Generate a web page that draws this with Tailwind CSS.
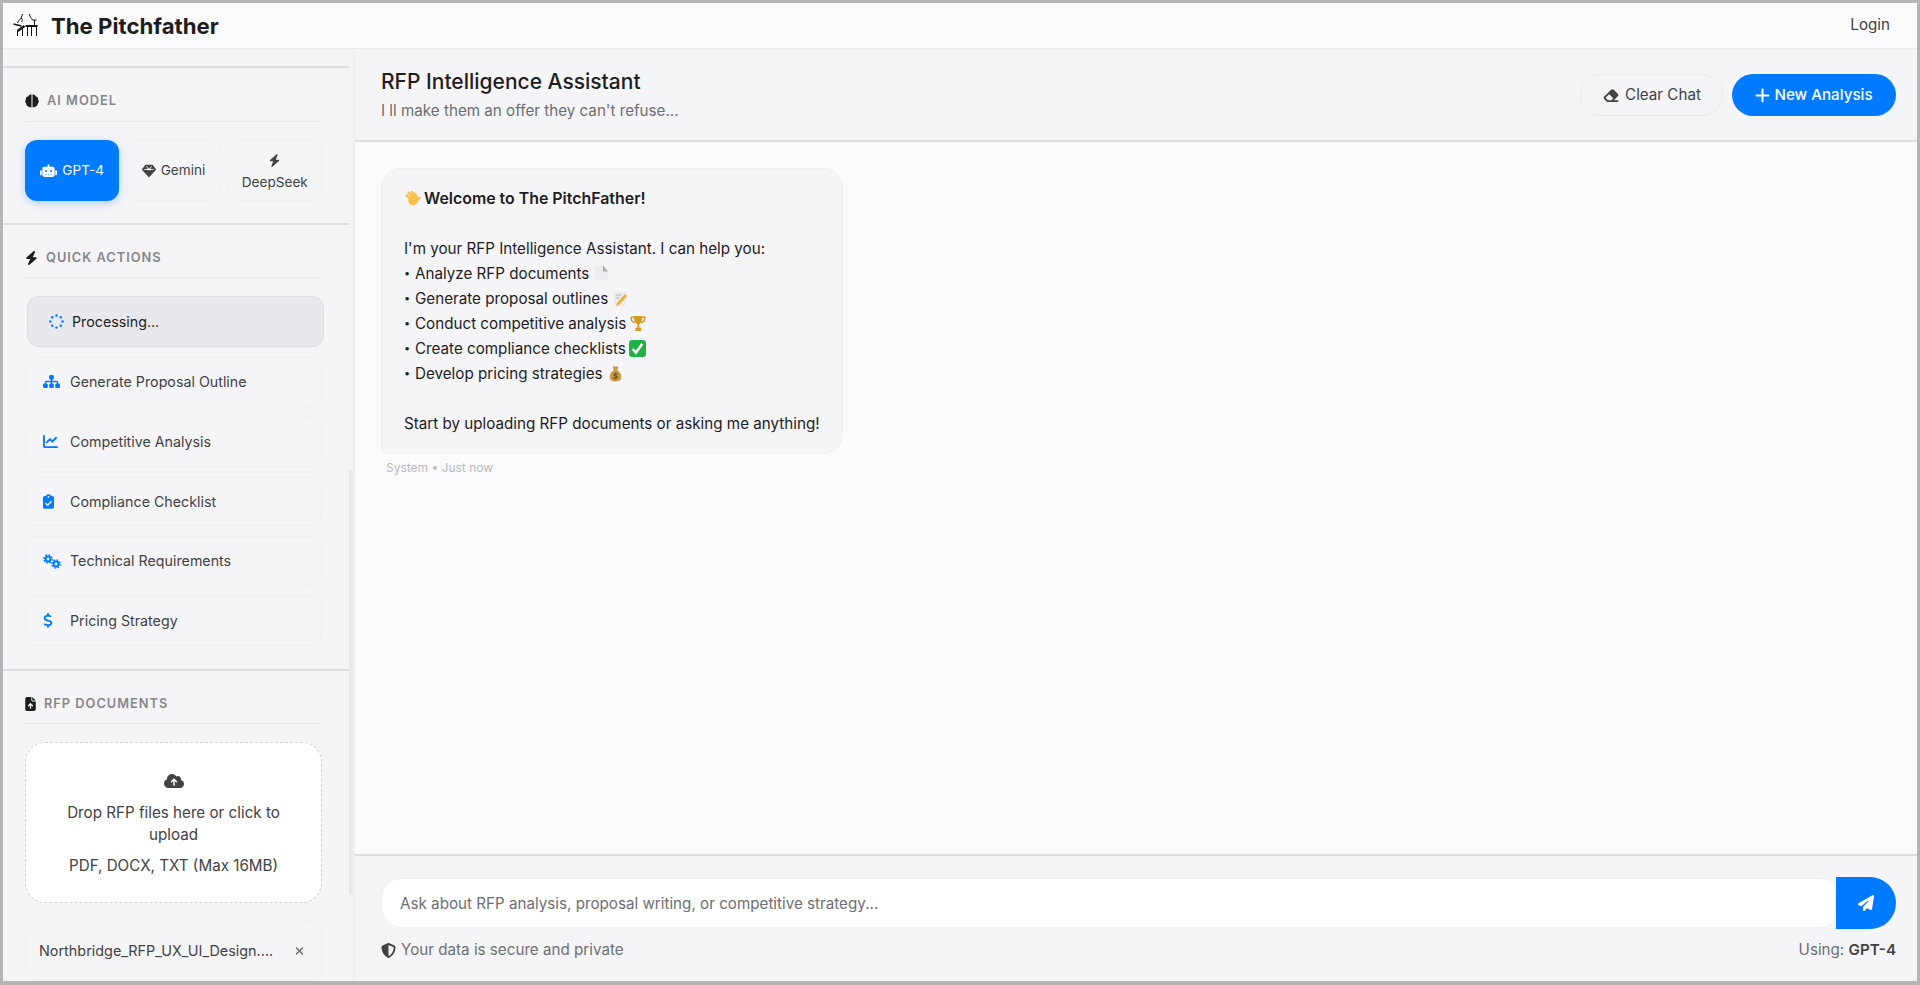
<!DOCTYPE html>
<html lang="en">
<head>
    <meta charset="UTF-8" />
    <meta name="viewport" content="width=device-width, initial-scale=1" />
    <title>The Pitchfather</title>
    <script src="https://cdn.jsdelivr.net/npm/@tailwindcss/browser@4"></script>
</head>
<body class="h-[985px] overflow-hidden bg-[#b4b4b4] pt-[3px] px-[3px] pb-[4px] font-['Inter',sans-serif] text-[#1d1d1f]">
<div class="flex h-full flex-col overflow-hidden bg-[#f5f5f7]">
    <!-- navbar -->
    <nav class="flex h-[46px] shrink-0 items-center justify-between border-b border-[#ececf0] bg-[#fbfbfd] pl-[9px] pr-[27px]">
        <div class="flex items-center gap-[11px]">
            <svg class="w-[28px] h-[25px]" viewBox="0 0 27 25" fill="none" stroke="#111" stroke-width="1">
                <path d="M5 10C6 7 9 6 10 1M9 5c1 2 1 3 0 4"/>
                <path d="M1 11l8 2" stroke-width="1.800"/>
                <path d="M5 18l7-5" stroke-width="2.200"/>
                <path d="M5 18v5M10 15v8M15 14v9M19 14v9M24 14v9"/>
                <path d="M13 13h12" stroke-width="2"/>
                <path d="M17 1c0 3 2 4 3 6h4M22 7v5"/>
            </svg>
            <span class="text-[22.200px] font-bold text-[#1d1d1f]">The Pitchfather</span>
        </div>
        <a href="#" class="text-[15.200px] text-[#424245]">Login</a>
    </nav>

    <div class="flex min-h-0 flex-1">
        <!-- sidebar -->
        <aside class="relative flex w-[352px] shrink-0 flex-col overflow-hidden border-r-2 border-[#f0f0f3] pr-[4px]">
            <div class="h-[19px] shrink-0 border-b-2 border-[#dedee2]"></div>

            <section class="shrink-0 border-b-2 border-[#dedee2] pl-[22px] pr-[27px] pt-[24px] pb-[22px]">
                <h3 class="mb-[18px] flex h-[30px] items-start gap-[8px] border-b border-[#e8e8ed] text-[12.800px] font-semibold uppercase leading-[18px] tracking-[1px] text-[#86868b]">
                    <svg class="mt-[2px] w-[14px] h-[14px]" viewBox="0 0 14 14" fill="#1d1d1f"><path d="M6.500.5C5 .3 3.800 1 3.400 2.200 1.800 2.500.7 3.800.9 5.400 0 6.600 0 8.600 1.200 9.600c0 1.800 1.500 3.800 5.300 3.900zM7.500.5C9 .3 10.200 1 10.600 2.200c1.600.3 2.700 1.600 2.500 3.200.9 1.200.9 3.200-.3 4.200 0 1.800-1.500 3.800-5.300 3.900z"/></svg>
                    AI Model
                </h3>
                <div class="grid grid-cols-3 gap-[7px]">
                    <button class="flex h-[61px] items-center justify-center gap-[5px] rounded-[12px] bg-[#007aff] text-[13.600px] text-white shadow-[0_2px_8px_rgba(0,122,255,0.3)]">
                        <svg class="w-[17px] h-[14px]" viewBox="0 0 640 512" fill="#fff"><path d="M320 0c17.700 0 32 14.300 32 32V96H472c44.200 0 80 35.800 80 80V400c0 44.200-35.800 80-80 80H168c-44.200 0-80-35.800-80-80V176c0-44.200 35.800-80 80-80H288V32c0-17.700 14.300-32 32-32zM208 384c-8.800 0-16 7.200-16 16s7.200 16 16 16h32c8.800 0 16-7.200 16-16s-7.200-16-16-16H208zm96 0c-8.800 0-16 7.200-16 16s7.200 16 16 16h32c8.800 0 16-7.200 16-16s-7.200-16-16-16H304zm96 0c-8.800 0-16 7.200-16 16s7.200 16 16 16h32c8.800 0 16-7.200 16-16s-7.200-16-16-16H400zM264 256a40 40 0 1 0 -80 0 40 40 0 1 0 80 0zm152 40a40 40 0 1 0 0-80 40 40 0 1 0 0 80zM48 224H64V416H48c-26.500 0-48-21.500-48-48V272c0-26.500 21.500-48 48-48zm544 0c26.500 0 48 21.500 48 48v96c0 26.500-21.500 48-48 48H576V224h16z"/></svg>
                        GPT-4
                    </button>
                    <button class="flex h-[61px] items-center justify-center gap-[5px] rounded-[12px] border border-[#f0f0f3] text-[13.600px] text-[#424245]">
                        <svg class="w-[14px] h-[14px]" viewBox="0 0 512 512" fill="#424245"><path d="M116.700 33.800c4.500-6.100 11.700-9.800 19.300-9.800H376c7.600 0 14.800 3.600 19.300 9.800l112 152c6.800 9.200 6.100 21.900-1.500 30.400l-232 256c-4.500 5-11 7.900-17.800 7.900s-13.200-2.900-17.800-7.900l-232-256c-7.700-8.500-8.300-21.200-1.500-30.400l112-152zm38.500 39.800c-3.300 2.500-4.200 7-2.100 10.500l57.400 95.600L63.300 192c-4.100 .3-7.300 3.800-7.300 8s3.200 7.600 7.300 8l192 16c.4 0 .9 0 1.300 0l192-16c4.100-.3 7.300-3.800 7.300-8s-3.200-7.600-7.300-8L301.500 179.800l57.400-95.600c2.100-3.500 1.200-8.100-2.100-10.500s-7.900-2-10.700 1L256 172.200 165.900 74.600c-2.800-3-7.400-3.400-10.700-1z"/></svg>
                        Gemini
                    </button>
                    <button class="flex h-[61px] flex-col items-center justify-start rounded-[12px] border border-[#f0f0f3] pt-[13px] text-[13.600px] leading-[21px] text-[#424245]">
                        <svg class="mb-[5px] w-[11px] h-[13px]" viewBox="0 0 448 512" fill="#424245"><path d="M349.400 44.600c5.900-13.700 1.500-29.700-10.600-38.500s-28.600-8-39.900 1.800l-256 224c-10 8.800-13.600 22.900-8.900 35.300S50.700 288 64 288H175.500L98.600 467.400c-5.900 13.700-1.500 29.700 10.600 38.500s28.600 8 39.900-1.800l256-224c10-8.800 13.600-22.900 8.900-35.300s-16.600-20.700-30-20.700H272.500L349.400 44.600z"/></svg>
                        DeepSeek
                    </button>
                </div>
            </section>

            <section class="shrink-0 border-b-2 border-[#dedee2] pl-[22px] pr-[27px] pt-[24px] pb-[23px]">
                <h3 class="mb-[18px] flex h-[29px] items-start gap-[8px] border-b border-[#e8e8ed] text-[12.800px] font-semibold uppercase leading-[18px] tracking-[1px] text-[#86868b]">
                    <svg class="mt-[2px] w-[13px] h-[14px]" viewBox="0 0 448 512" fill="#1d1d1f"><path d="M349.400 44.600c5.900-13.700 1.500-29.700-10.600-38.500s-28.600-8-39.900 1.800l-256 224c-10 8.800-13.600 22.900-8.900 35.300S50.700 288 64 288H175.500L98.600 467.400c-5.900 13.700-1.500 29.700 10.600 38.500s28.600 8 39.900-1.800l256-224c10-8.800 13.600-22.900 8.900-35.300s-16.600-20.700-30-20.700H272.500L349.400 44.600z"/></svg>
                    Quick Actions
                </h3>
                <div class="flex flex-col gap-[10px]">
                    <button class="flex h-[51px] translate-x-[2px] items-center rounded-[12px] border border-[#dcdce1] bg-[#e8e8ed] pl-[21px] text-[14.250px] text-[#1d1d1f]">
                        <svg class="mr-[8px] w-[15px] h-[15px]" viewBox="0 0 16 16" fill="#007aff"><circle cx="8" cy="1.500" r="1.300"/><circle cx="12.600" cy="3.400" r="1.300"/><circle cx="14.500" cy="8" r="1.300"/><circle cx="12.600" cy="12.600" r="1.300"/><circle cx="8" cy="14.500" r="1.300"/><circle cx="3.400" cy="12.600" r="1.300"/><circle cx="1.500" cy="8" r="1.300"/><circle cx="3.400" cy="3.400" r="1.300"/></svg>
                        Processing...
                    </button>
                    <button class="flex h-[49.750px] items-center rounded-[12px] border border-[#f0f0f3] pl-[17px] text-[14.250px] text-[#424245]">
                        <span class="flex w-[27px] items-center"><svg class="w-[17px] h-[15px]" viewBox="0 0 576 512" fill="#007aff"><path d="M208 80c0-26.500 21.500-48 48-48h64c26.500 0 48 21.500 48 48v64c0 26.500-21.500 48-48 48h-8v40H464c30.900 0 56 25.100 56 56v32h8c26.500 0 48 21.500 48 48v64c0 26.500-21.500 48-48 48H464c-26.500 0-48-21.500-48-48V368c0-26.500 21.500-48 48-48h8V288c0-4.400-3.600-8-8-8H312v40h8c26.500 0 48 21.500 48 48v64c0 26.500-21.500 48-48 48H256c-26.500 0-48-21.500-48-48V368c0-26.500 21.500-48 48-48h8V280H112c-4.400 0-8 3.600-8 8v32h8c26.500 0 48 21.500 48 48v64c0 26.500-21.500 48-48 48H48c-26.500 0-48-21.500-48-48V368c0-26.500 21.500-48 48-48h8V288c0-30.900 25.100-56 56-56H264V192h-8c-26.500 0-48-21.500-48-48V80z"/></svg></span>
                        Generate Proposal Outline
                    </button>
                    <button class="flex h-[49.750px] items-center rounded-[12px] border border-[#f0f0f3] pl-[17px] text-[14.250px] text-[#424245]">
                        <span class="flex w-[27px] items-center"><svg class="w-[15px] h-[15px]" viewBox="0 0 512 512" fill="#007aff"><path d="M64 64c0-17.700-14.300-32-32-32S0 46.300 0 64V400c0 44.200 35.800 80 80 80H480c17.700 0 32-14.300 32-32s-14.300-32-32-32H80c-8.800 0-16-7.200-16-16V64zm406.600 86.600c12.500-12.500 12.500-32.800 0-45.300s-32.800-12.500-45.300 0L320 210.700l-57.400-57.400c-12.500-12.500-32.800-12.500-45.300 0l-112 112c-12.500 12.500-12.500 32.800 0 45.300s32.800 12.500 45.300 0L240 221.300l57.400 57.400c12.500 12.500 32.800 12.500 45.300 0l128-128z"/></svg></span>
                        Competitive Analysis
                    </button>
                    <button class="flex h-[49.750px] items-center rounded-[12px] border border-[#f0f0f3] pl-[17px] text-[14.250px] text-[#424245]">
                        <span class="flex w-[27px] items-center"><svg class="w-[11px] h-[15px]" viewBox="0 0 384 512" fill="#007aff"><path d="M192 0c-41.800 0-77.400 26.700-90.500 64H64C28.700 64 0 92.700 0 128V448c0 35.300 28.700 64 64 64H320c35.300 0 64-28.700 64-64V128c0-35.300-28.700-64-64-64H282.500C269.400 26.700 233.800 0 192 0zm0 64a32 32 0 1 1 0 64 32 32 0 1 1 0-64zM305 273L177 401c-9.400 9.400-24.600 9.400-33.900 0L79 337c-9.400-9.400-9.400-24.600 0-33.900s24.600-9.400 33.900 0l47 47L271 239c9.400-9.400 24.600-9.400 33.900 0s9.400 24.600 0 33.900z"/></svg></span>
                        Compliance Checklist
                    </button>
                    <button class="flex h-[49.750px] items-center rounded-[12px] border border-[#f0f0f3] pl-[17px] text-[14.250px] text-[#424245]">
                        <span class="flex w-[27px] items-center"><svg class="w-[18px] h-[15px]" viewBox="0 0 18 15" fill="none" stroke="#007aff"><circle cx="5" cy="5" r="2.400" stroke-width="2"/><circle cx="5" cy="5" r="4" stroke-width="1.600" stroke-dasharray="1.600 1.540"/><circle cx="13" cy="10" r="2.400" stroke-width="2"/><circle cx="13" cy="10" r="4" stroke-width="1.600" stroke-dasharray="1.600 1.540"/></svg></span>
                        Technical Requirements
                    </button>
                    <button class="flex h-[49.750px] items-center rounded-[12px] border border-[#f0f0f3] pl-[17px] text-[14.250px] text-[#424245]">
                        <span class="flex w-[27px] items-center"><svg class="w-[10px] h-[15px]" viewBox="0 0 320 512" fill="#007aff"><path d="M160 0c17.700 0 32 14.300 32 32V67.700c1.600 .2 3.100 .4 4.700 .7c.4 .1 .7 .1 1.100 .2l48 8.800c17.400 3.200 28.900 19.900 25.700 37.200s-19.900 28.900-37.200 25.700l-47.500-8.700c-31.300-4.600-58.900-1.500-78.300 6.200s-27.200 18.300-29 28.100c-2 10.700-.5 16.700 1.200 20.400c1.800 3.900 5.500 8.300 12.800 13.200c16.300 10.700 41.300 17.700 73.700 26.300l2.900 .8c28.600 7.600 63.600 16.800 89.600 33.800c14.200 9.300 27.600 21.900 35.900 39.500c8.500 17.900 10.300 37.900 6.400 59.200c-6.900 38-33.100 63.400-65.600 76.700c-13.700 5.600-28.600 9.200-44.400 11V480c0 17.700-14.300 32-32 32s-32-14.300-32-32V445.100c-.4-.1-.9-.1-1.300-.2l-.2 0 0 0c-24.400-3.800-64.500-14.300-91.500-26.300c-16.100-7.200-23.400-26.100-16.200-42.200s26.100-23.400 42.200-16.200c20.900 9.300 55.300 18.500 75.200 21.600c31.900 4.700 58.200 2 76-5.300c16.900-6.900 24.600-16.900 26.800-28.900c1.900-10.600 .4-16.700-1.300-20.400c-1.900-4-5.600-8.400-13-13.300c-16.400-10.700-41.500-17.700-74-26.300l-2.800-.7 0 0C119.400 279.300 84.400 270 58.400 253c-14.200-9.300-27.500-22-35.800-39.600c-8.400-17.900-10.100-37.900-6.100-59.200C23.700 116 52.300 91.200 84.800 78.300c13.300-5.300 27.900-8.900 43.200-11V32c0-17.700 14.300-32 32-32z"/></svg></span>
                        Pricing Strategy
                    </button>
                </div>
            </section>

            <section class="shrink-0 pl-[22px] pr-[27px] pt-[24px]">
                <h3 class="mb-[18px] flex h-[29px] items-start gap-[8px] border-b border-[#e8e8ed] text-[12.800px] font-semibold uppercase leading-[18px] tracking-[1px] text-[#86868b]">
                    <svg class="mt-[2px] w-[11px] h-[14px]" viewBox="0 0 384 512" fill="#1d1d1f"><path d="M64 0C28.700 0 0 28.700 0 64V448c0 35.300 28.700 64 64 64H320c35.300 0 64-28.700 64-64V160H256c-17.700 0-32-14.300-32-32V0H64zM384 128L256 0V128H384zM216 408c0 13.300-10.700 24-24 24s-24-10.700-24-24V305.900l-31 31c-9.400 9.400-24.600 9.400-33.900 0s-9.400-24.600 0-33.900l72-72c9.400-9.400 24.600-9.400 33.900 0l72 72c9.400 9.400 9.400 24.600 0 33.900s-24.600 9.400-33.900 0l-31-31V408z"/></svg>
                    RFP Documents
                </h3>
                <div class="flex h-[161px] flex-col items-center rounded-[20px] border border-dashed border-[#d2d2d7] bg-white px-[24px] pt-[30px] text-center text-[15.200px] leading-[22px] text-[#424245]">
                    <svg class="mb-[13px] w-[20px] h-[16px]" viewBox="0 0 640 512" fill="#424245"><path d="M144 480C64.500 480 0 415.500 0 336c0-62.800 40.200-116.200 96.200-135.900c-.1-2.700-.2-5.400-.2-8.100c0-88.400 71.600-160 160-160c59.300 0 111 32.200 138.700 80.200C409.900 102 428.300 96 448 96c53 0 96 43 96 96c0 12.200-2.300 23.800-6.400 34.600C596 238.400 640 290.100 640 352c0 70.700-57.300 128-128 128H144zm79-217c-9.400 9.400-9.400 24.600 0 33.900s24.600 9.400 33.900 0l39-39V392c0 13.300 10.700 24 24 24s24-10.700 24-24V257.900l39 39c9.400 9.400 24.600 9.400 33.900 0s9.400-24.600 0-33.900l-80-80c-9.400-9.400-24.600-9.400-33.900 0l-80 80z"/></svg>
                    <p>Drop RFP files here or click to upload</p>
                    <p class="mt-[9px]">PDF, DOCX, TXT (Max 16MB)</p>
                </div>
                <div class="mt-[18px] flex h-[60px] items-center justify-between rounded-[12px] border border-[#f0f0f3] pl-[13px] pr-[17px] text-[14.400px] text-[#424245]">
                    <span>Northbridge_RFP_UX_UI_Design....</span>
                    <svg class="w-[9px] h-[12px]" viewBox="0 0 384 512" fill="#6e6e73"><path d="M342.600 150.600c12.500-12.500 12.500-32.800 0-45.300s-32.800-12.500-45.300 0L192 210.700 86.600 105.400c-12.500-12.500-32.800-12.500-45.300 0s-12.500 32.800 0 45.300L146.700 256 41.400 361.400c-12.500 12.500-12.500 32.800 0 45.300s32.800 12.500 45.300 0L192 301.300 297.400 406.600c12.500 12.500 32.800 12.500 45.300 0s12.500-32.800 0-45.300L237.300 256 342.600 150.600z"/></svg>
                </div>
            </section>

            <!-- scrollbar thumb -->
            <div class="absolute right-0 top-[421px] h-[425px] w-[4px] bg-[#e8e8ed]"></div>
        </aside>

        <!-- main -->
        <main class="flex min-w-0 flex-1 flex-col">
            <header class="flex h-[93px] shrink-0 items-center justify-between border-b-2 border-[#dedee2] pl-[26px] pr-[21px]">
                <div class="-mt-[1px]">
                    <h1 class="text-[21px] font-medium leading-[30px] text-[#1d1d1f]">RFP Intelligence Assistant</h1>
                    <p class="mt-[3px] text-[15.200px] leading-[22px] text-[#6e6e73]">I ll make them an offer they can't refuse...</p>
                </div>
                <div class="mt-[1px] flex items-center gap-[9px]">
                    <button class="flex h-[42px] w-[143px] items-center justify-center gap-[5px] rounded-full border border-[#ececf0] text-[15.200px] text-[#424245]">
                        <svg class="w-[18px] h-[15px]" viewBox="0 0 576 512" fill="#424245"><path d="M290.700 57.400L57.400 290.700c-25 25-25 65.500 0 90.500l80 80c12 12 28.300 18.700 45.300 18.700H288h9.400H512c17.700 0 32-14.300 32-32s-14.300-32-32-32H387.900L518.600 285.300c25-25 25-65.500 0-90.500L381.300 57.400c-25-25-65.500-25-90.500 0zM297.400 416H288l-105.400 0-80-80L227.300 211.300 364.700 348.700 297.400 416z"/></svg>
                        Clear Chat
                    </button>
                    <button class="flex h-[42px] w-[164px] items-center justify-center gap-[4px] rounded-full bg-[#007aff] text-[15.200px] font-medium text-white">
                        <svg class="w-[15px] h-[17px]" viewBox="0 0 448 512" fill="#fff"><path d="M256 80c0-17.700-14.300-32-32-32s-32 14.300-32 32V224H48c-17.700 0-32 14.300-32 32s14.300 32 32 32H192V432c0 17.700 14.300 32 32 32s32-14.300 32-32V288H400c17.700 0 32-14.300 32-32s-14.300-32-32-32H256V80z"/></svg>
                        New Analysis
                    </button>
                </div>
            </header>

            <div class="min-h-0 flex-1 bg-[#fbfbfd] pl-[26px] pt-[26px]">
                <div class="w-fit rounded-[20px] rounded-bl-[6px] border border-[#f0f0f3] bg-[#f5f5f7] px-[22px] pt-[17px] pb-[17px] text-[15.200px] leading-[25px] text-[#1d1d1f]">
                    <p class="flex items-center gap-[3px] text-[15.900px] font-semibold">
                        <svg class="w-[17px] h-[17px]" viewBox="0 0 16 16" fill="none" stroke="#f7c04a" stroke-linecap="round"><circle cx="8.500" cy="10" r="4.500" fill="#f7c04a" stroke="none"/><path d="M6 9 2.500 5M8 7 4.500 2.500M10 7 7.500 1.800M12 8l-1.500-4.500M12.500 10l2-2.500" stroke-width="2.200"/></svg>
                        Welcome to The PitchFather!
                    </p>
                    <p class="h-[25px]"></p>
                    <p>I'm your RFP Intelligence Assistant. I can help you:</p>
                    <p class="flex items-center"><span class="w-[11px] text-[11px]">•</span>Analyze RFP documents
                        <svg class="ml-[5px] w-[15px] h-[17px]" viewBox="0 0 15 16"><path d="M1 0h8l5 6v9H1z" fill="#ededf0"/><path d="M9 0l5 6H9z" fill="#a9a9b0"/></svg>
                    </p>
                    <p class="flex items-center"><span class="w-[11px] text-[11px]">•</span>Generate proposal outlines
                        <svg class="ml-[5px] w-[15px] h-[16px]" viewBox="0 0 15 16"><rect x="1" y="1" width="12" height="14" fill="#ececec"/><path d="M4 12 12 3l2 2-8 9-3 1z" fill="#eab23c"/><path d="M3 4h5M3 7h3" stroke="#b0b0b8"/></svg>
                    </p>
                    <p class="flex items-center"><span class="w-[11px] text-[11px]">•</span>Conduct competitive analysis
                        <svg class="ml-[4px] w-[16px] h-[17px]" viewBox="0 0 15 16"><path d="M1 2h13c0 4-2 5-4 5M1 2c0 4 2 5 4 5" fill="none" stroke="#c88a1c" stroke-width="1.200"/><path d="M3.500 1h8c0 4-1 7-3 8v3h2v3H5v-3h2V9C5 8 3.500 5 3.500 1z" fill="#d89a22"/></svg>
                    </p>
                    <p class="flex items-center"><span class="w-[11px] text-[11px]">•</span>Create compliance checklists
                        <svg class="ml-[3px] w-[17px] h-[17px]" viewBox="0 0 16 16"><rect width="16" height="16" rx="3" fill="#1fb141"/><path d="M3.500 8.500 6.500 12 12.500 3.500" fill="none" stroke="#fff" stroke-width="2.400"/></svg>
                    </p>
                    <p class="flex items-center"><span class="w-[11px] text-[11px]">•</span>Develop pricing strategies
                        <svg class="ml-[6px] w-[13px] h-[16px]" viewBox="0 0 14 16"><path d="M4 0h6L9 4c3 2 5 5 4 9-1 2-3 3-6 3s-5-1-6-3C0 9 2 6 5 4z" fill="#c99a4c"/><text x="7" y="13" font-size="8" font-weight="700" text-anchor="middle" fill="#6d4a10">$</text></svg>
                    </p>
                    <p class="h-[25px]"></p>
                    <p>Start by uploading RFP documents or asking me anything!</p>
                </div>
                <p class="mt-[6px] pl-[5px] text-[12px] leading-[16px] text-[#b8b8bd]">System • Just now</p>
            </div>

            <!-- input -->
            <div class="h-[127px] shrink-0 border-t-2 border-[#dedee2] pl-[26px] pr-[21px] pt-[22px]">
                <div class="flex h-[50px] items-center">
                    <input type="text" placeholder="Ask about RFP analysis, proposal writing, or competitive strategy..." class="h-full min-w-0 flex-1 rounded-l-[20px] rounded-r-[14px] border border-[#f0f0f3] bg-white pl-[18px] text-[15.200px] outline-none placeholder:text-[#6e6e73]" />
                    <button class="flex h-[52px] w-[60px] shrink-0 items-center justify-center rounded-r-[26px] bg-[#007aff]">
                        <svg class="w-[16px] h-[16px]" viewBox="0 0 512 512" fill="#fff"><path d="M498.100 5.600c10.100 7 15.400 19.100 13.500 31.200l-64 416c-1.500 9.700-7.400 18.200-16 23s-18.900 5.400-28 1.600L284 427.700l-68.500 74.100c-8.900 9.700-22.900 12.900-35.200 8.100S160 493.200 160 480V396.400c0-4 1.500-7.800 4.200-10.700L331.800 202.800c5.800-6.300 5.600-16-.4-22s-15.700-6.400-22-.7L106 360.800 17.700 316.600C7.100 311.300 .3 300.700 0 288.900s5.900-22.800 16.100-28.700l448-256c10.700-6.100 23.900-5.500 34 1.400z"/></svg>
                    </button>
                </div>
                <div class="mt-[12px] flex items-center justify-between text-[15.200px] leading-[20px] text-[#6e6e73]">
                    <span class="flex items-center gap-[5px]">
                        <svg class="w-[15px] h-[15px]" viewBox="0 0 512 512" fill="#424245"><path d="M256 0c4.600 0 9.200 1 13.400 2.900L457.700 82.800c22 9.300 38.400 31 38.300 57.200c-.5 99.200-41.300 280.700-213.600 363.200c-16.700 8-36.100 8-52.800 0C57.300 420.700 16.500 239.200 16 140c-.1-26.200 16.300-47.900 38.300-57.200L242.700 2.900C246.800 1 251.400 0 256 0zm0 66.800V444.800C394 378 431.100 230.100 432 141.400L256 66.800l0 0z"/></svg>
                        Your data is secure and private
                    </span>
                    <span>Using: <strong class="font-semibold text-[#424245]">GPT-4</strong></span>
                </div>
            </div>
        </main>
    </div>
</div>
</body>
</html>
